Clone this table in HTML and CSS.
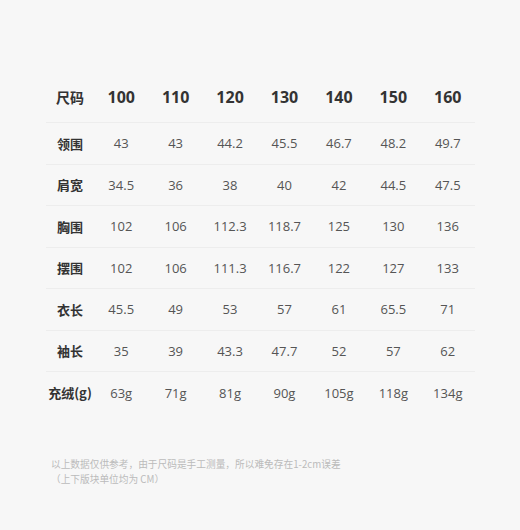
FILE: index.html
```html
<!DOCTYPE html>
<html lang="zh">
<head>
<meta charset="utf-8">
<link rel="stylesheet" href="styles.css">
</head>
<body>
<div class="page">
  <table class="size-table">
    <thead>
      <tr class="head-row">
        <th class="label">尺码</th>
        <th>100</th><th>110</th><th>120</th><th>130</th><th>140</th><th>150</th><th>160</th>
      </tr>
    </thead>
    <tbody>
      <tr><th class="label">领围</th><td>43</td><td>43</td><td>44.2</td><td>45.5</td><td>46.7</td><td>48.2</td><td>49.7</td></tr>
      <tr><th class="label">肩宽</th><td>34.5</td><td>36</td><td>38</td><td>40</td><td>42</td><td>44.5</td><td>47.5</td></tr>
      <tr><th class="label">胸围</th><td>102</td><td>106</td><td>112.3</td><td>118.7</td><td>125</td><td>130</td><td>136</td></tr>
      <tr><th class="label">摆围</th><td>102</td><td>106</td><td>111.3</td><td>116.7</td><td>122</td><td>127</td><td>133</td></tr>
      <tr><th class="label">衣长</th><td>45.5</td><td>49</td><td>53</td><td>57</td><td>61</td><td>65.5</td><td>71</td></tr>
      <tr><th class="label">袖长</th><td>35</td><td>39</td><td>43.3</td><td>47.7</td><td>52</td><td>57</td><td>62</td></tr>
      <tr class="last"><th class="label">充绒(g)</th><td>63g</td><td>71g</td><td>81g</td><td>90g</td><td>105g</td><td>118g</td><td>134g</td></tr>
    </tbody>
  </table>
  <div class="note">
    <p>以上数据仅供参考，由于尺码是手工测量，所以难免存在1-2cm误差</p>
    <p>（上下版块单位均为 CM）</p>
  </div>
</div>
</body>
</html>
```
FILE: styles.css
```css
html, body {
  margin: 0;
  padding: 0;
  background: #f7f7f7;
}
body {
  font-family: "Open Sans", "Noto Sans CJK SC", sans-serif;
  color: #555;
  width: 520px;
  height: 530px;
}
.page {
  padding: 72px 45px 0 46px;
}
.size-table {
  border-collapse: collapse;
  width: 429px;
  table-layout: fixed;
}
.size-table th,
.size-table td {
  padding: 0;
  text-align: center;
  font-weight: normal;
}
.size-table .label {
  width: 48px;
  font-family: "Noto Sans CJK SC", sans-serif;
  font-weight: bold;
  font-size: 13px;
  color: #333;
}
.head-row th {
  height: 50px;
  font-size: 16px;
  font-weight: bold;
  color: #333;
  border-bottom: 1px solid #ededed;
}
.head-row th.label {
  font-size: 14px;
}
tbody tr {
  height: 41.5px;
}
tbody tr td,
tbody tr th {
  border-bottom: 1px solid #ededed;
}
tbody tr.last td,
tbody tr.last th {
  border-bottom: none;
}
.size-table td {
  font-size: 13px;
  color: #555;
}
.note {
  margin-top: 44px;
  padding-left: 5px;
  font-family: "Noto Sans CJK SC", sans-serif;
  font-size: 9.7px;
  color: #bbb;
  line-height: 15px;
}
.note p {
  margin: 0;
}
```
